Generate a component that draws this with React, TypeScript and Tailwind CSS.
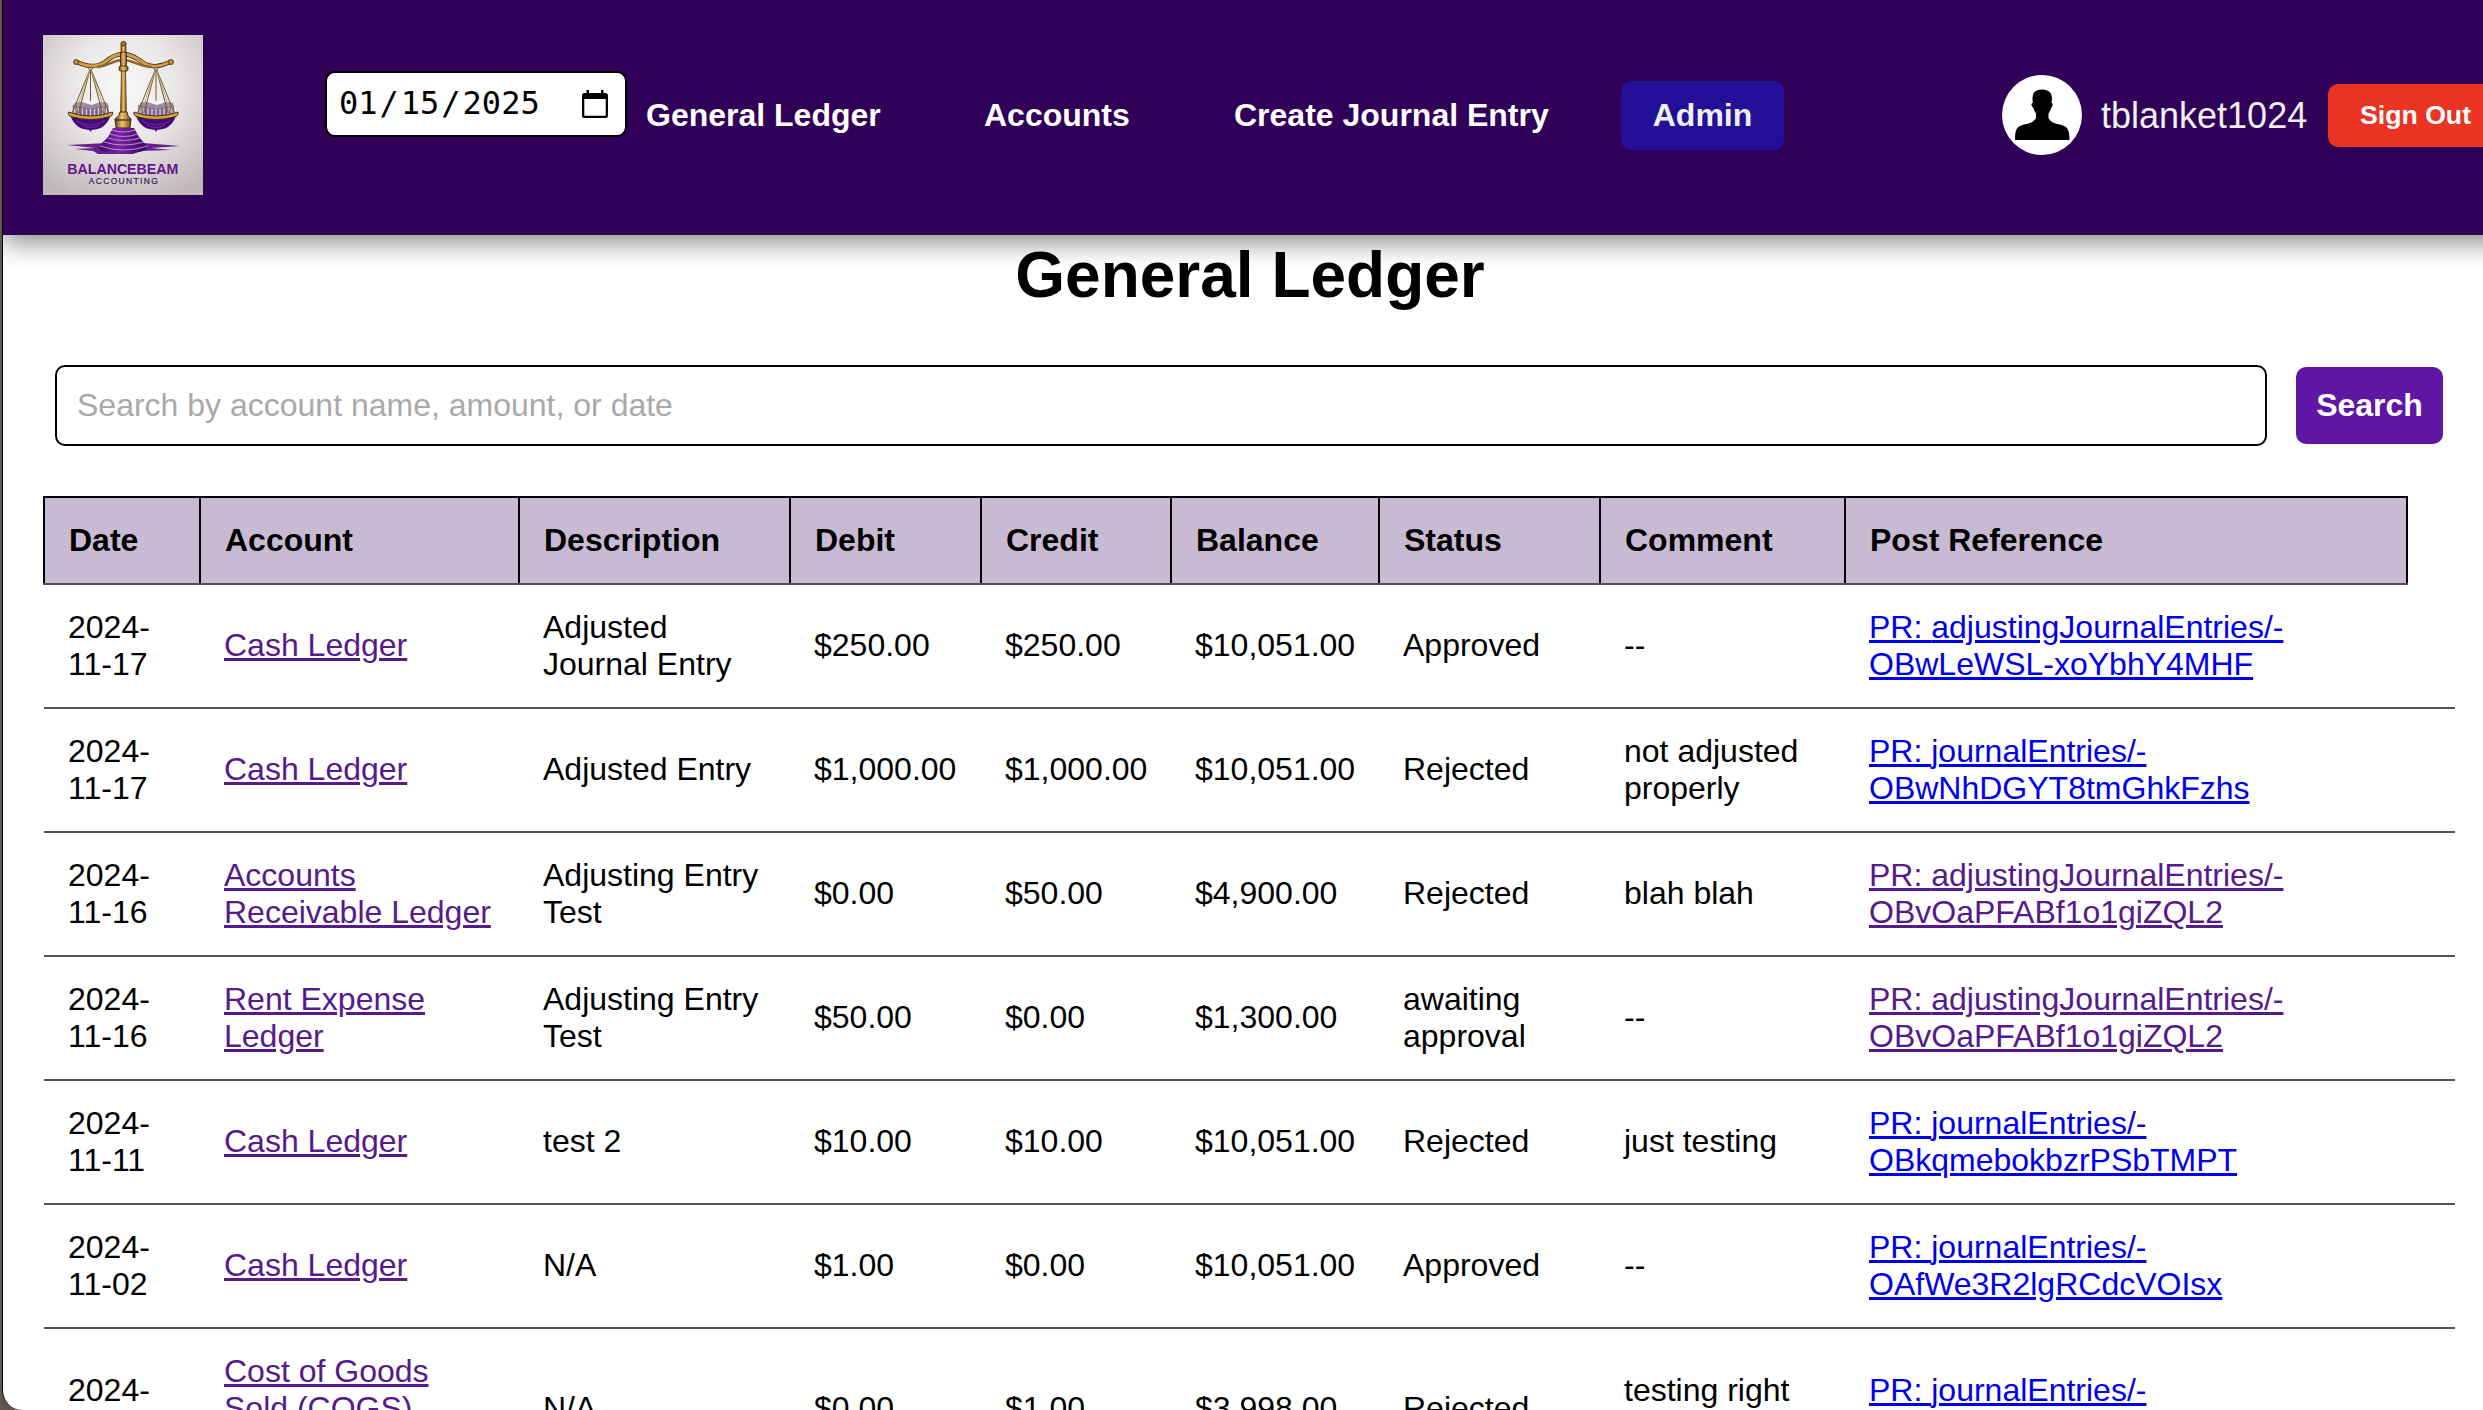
import React from "react";

type Row = {
  date: string;
  account: string;
  description: string;
  debit: string;
  credit: string;
  balance: string;
  status: string;
  comment: string;
  path: string;
  id: string;
  visited?: boolean;
};

const rows: Row[] = [
  { date: "2024-11-17", account: "Cash Ledger", description: "Adjusted Journal Entry", debit: "$250.00", credit: "$250.00", balance: "$10,051.00", status: "Approved", comment: "--", path: "adjustingJournalEntries/-", id: "OBwLeWSL-xoYbhY4MHF" },
  { date: "2024-11-17", account: "Cash Ledger", description: "Adjusted Entry", debit: "$1,000.00", credit: "$1,000.00", balance: "$10,051.00", status: "Rejected", comment: "not adjusted properly", path: "journalEntries/-", id: "OBwNhDGYT8tmGhkFzhs" },
  { date: "2024-11-16", account: "Accounts Receivable Ledger", description: "Adjusting Entry Test", debit: "$0.00", credit: "$50.00", balance: "$4,900.00", status: "Rejected", comment: "blah blah", path: "adjustingJournalEntries/-", id: "OBvOaPFABf1o1giZQL2", visited: true },
  { date: "2024-11-16", account: "Rent Expense Ledger", description: "Adjusting Entry Test", debit: "$50.00", credit: "$0.00", balance: "$1,300.00", status: "awaiting approval", comment: "--", path: "adjustingJournalEntries/-", id: "OBvOaPFABf1o1giZQL2", visited: true },
  { date: "2024-11-11", account: "Cash Ledger", description: "test 2", debit: "$10.00", credit: "$10.00", balance: "$10,051.00", status: "Rejected", comment: "just testing", path: "journalEntries/-", id: "OBkqmebokbzrPSbTMPT" },
  { date: "2024-11-02", account: "Cash Ledger", description: "N/A", debit: "$1.00", credit: "$0.00", balance: "$10,051.00", status: "Approved", comment: "--", path: "journalEntries/-", id: "OAfWe3R2lgRCdcVOIsx" },
  { date: "2024-11-02", account: "Cost of Goods Sold (COGS) Ledger", description: "N/A", debit: "$0.00", credit: "$1.00", balance: "$3,998.00", status: "Rejected", comment: "testing right now", path: "journalEntries/-", id: "OAfWe3R2lgRCdcVOIsx" },
];

const headers = ["Date", "Account", "Description", "Debit", "Credit", "Balance", "Status", "Comment", "Post Reference"];

// Cells that hold one line sit half a pixel higher so that their baseline lands on a whole pixel.
const cell = (text: string) => (text.length < 16 ? "px-6 pt-6 pb-[25px]" : "px-6 py-6");

function Pan({ x }: { x: number }) {
  return (
    <g transform={`translate(${x} 0)`}>
      <path d="M-19 64 L-16 52 L0 48 L17 52 L19 64 Z" fill="#9c8ba2" />
      <path d="M-18 54 L0 58 L18 54 L17 66 H-17 Z" fill="#7d6b88" />
      <path d="M-12 50 L0 47.500 L13 50 L1 54 Z" fill="#f7f4f8" />
      <path d="M-16 55 v9 M-12 57 v8 M-8 57 v9 M-4 58 v9 M0 58 v9 M4 58 v9 M8 57 v9 M12 57 v8 M16 55 v9" stroke="#d9cedd" strokeWidth="1.200" />
      <path d="M0 17 L-18 61 M0 17 L-12 62 M0 17 V50 M0 17 L12 62 M0 17 L18 61" stroke="#6f5a2c" strokeWidth="1" fill="none" />
      <path d="M0 17 L-15 62 M0 17 L15 62" stroke="#c3a565" strokeWidth=".9" fill="none" />
      <path d="M-20 65 C-16 76 -8 79 0 79 C8 79 16 76 20 65 Z" fill="#430a78" />
      <path d="M-14 70 Q0 78 14 70 M-9 74 Q0 79 9 74" stroke="#7a2ab0" strokeWidth=".9" fill="none" />
      <path d="M-22 61 Q0 69 22 61 Q23 65 18 66 Q0 71 -18 66 Q-23 65 -22 61 Z" fill="#d3a03d" stroke="#3b2512" strokeWidth=".9" />
      <circle cx="0" cy="17" r="2" fill="#e8e4ea" stroke="#57496a" strokeWidth=".8" />
      <circle cx="0" cy="79.500" r="1" fill="#3b1260" />
    </g>
  );
}

function Logo() {
  return (
    <svg viewBox="0 0 160 160" className="h-[160px] w-[160px] shrink-0">
      <defs>
        <radialGradient id="paper" cx=".5" cy=".33" r=".75">
          <stop offset="0" stopColor="#fafafa" />
          <stop offset=".45" stopColor="#e9e6e6" />
          <stop offset="1" stopColor="#c1b8b9" />
        </radialGradient>
        <linearGradient id="gold" x1="0" x2="1">
          <stop offset="0" stopColor="#6b4312" />
          <stop offset=".45" stopColor="#f0c46c" />
          <stop offset="1" stopColor="#7a4d17" />
        </linearGradient>
        <linearGradient id="base" x1="0" x2="1">
          <stop offset="0" stopColor="#3c0867" />
          <stop offset=".4" stopColor="#8122a9" />
          <stop offset="1" stopColor="#32055b" />
        </linearGradient>
      </defs>
      <rect width="160" height="160" fill="url(#paper)" />
      <path d="M24 110 L65 108 H100 L137 111 L108 113 L128 115 L98 116 L90 119 H55 L50 116 L32 114 L52 113 Z" fill="#64208b" />
      <g transform="translate(0 16)">
        <Pan x={47.5} />
        <Pan x={113} />
      </g>
      <path d="M34 27 C44 32 53 33 62 27 C68 22 73 19 80 19 C87 19 92 22 99 27 C108 33 116 32 127 27" stroke="#432d17" strokeWidth="4.500" fill="none" strokeLinecap="round" />
      <path d="M34 27 C44 32 53 33 62 27 C68 22 73 19 80 19 C87 19 92 22 99 27 C108 33 116 32 127 27" stroke="#cf9e49" strokeWidth="3" fill="none" strokeLinecap="round" />
      <path d="M54 32 C66 31 70 25 80 25 C90 25 95 31 108 32" stroke="#8f6628" strokeWidth="2.500" fill="none" />
      <circle cx="33" cy="27" r="2.500" fill="#c18e3b" stroke="#432d17" strokeWidth=".8" />
      <circle cx="128" cy="27" r="2.500" fill="#c18e3b" stroke="#432d17" strokeWidth=".8" />
      <rect x="78" y="8" width="5" height="10" fill="url(#gold)" stroke="#3b2512" strokeWidth=".7" />
      <circle cx="80.500" cy="8.500" r="2.300" fill="#a87629" stroke="#3b2512" strokeWidth=".7" />
      <rect x="77.500" y="17" width="6" height="16" rx="2" fill="url(#gold)" stroke="#3b2512" strokeWidth=".8" />
      <path d="M78.500 33 H82.500 L83.500 79 H77.500 Z" fill="url(#gold)" stroke="#4b3016" strokeWidth=".7" />
      <rect x="76" y="31" width="9" height="5" rx="1.500" fill="url(#gold)" stroke="#3b2512" strokeWidth=".8" />
      <path d="M77 77 H84 Q84 81 88 84 L87 93 H73 L72 84 Q77 81 77 77 Z" fill="url(#gold)" stroke="#3b2512" />
      <path d="M72 85 H88" stroke="#3b2512" strokeWidth="1.200" />
      <path d="M70 93 H91 L96 102 L103 110 Q107 115 96 117 Q80 120 64 117 Q52 115 58 109 L65 102 Z" fill="url(#base)" />
      <path d="M69 95 Q80 99 92 95 M67 99 Q80 104 95 99 M65 103 Q80 108 97 103 M61 107 Q80 113 101 107 M57 111 Q80 119 105 111" stroke="#b892cb" strokeWidth="1" fill="none" />
      <text x="79.800" y="139.300" textAnchor="middle" textLength="111" lengthAdjust="spacingAndGlyphs" fontFamily="Liberation Sans, sans-serif" fontWeight="700" fontSize="14.500" fill="#64158f">BALANCEBEAM</text>
      <text x="80.300" y="149" textAnchor="middle" textLength="69" fontFamily="Liberation Sans, sans-serif" fontSize="8.500" fill="#38205f" stroke="#38205f" strokeWidth=".2">ACCOUNTING</text>
    </svg>
  );
}

function Calendar() {
  return (
    <svg viewBox="0 0 26 28" className="h-[28px] w-[26px]">
      <path d="M4.500 0 h2.500 v3 h12 v-3 h2.500 v3 h2 a2.500 2.500 0 0 1 2.500 2.500 V25.500 a2.500 2.500 0 0 1 -2.500 2.500 H2.500 A2.500 2.500 0 0 1 0 25.500 V5.500 A2.500 2.500 0 0 1 2.500 3 h2 Z M2.300 9 V25.700 H23.700 V9 Z" fill="#000" fillRule="evenodd" />
    </svg>
  );
}

function Avatar() {
  return (
    <svg viewBox="0 0 80 80" className="h-[80px] w-[80px] shrink-0">
      <circle cx="40" cy="40" r="40" fill="#fff" />
      <path d="M40 14.500 C47 14.500 50 18 50 24 L49.500 28 C51.500 28 50.500 32 49 33 C48.500 35.500 47.500 37 46.500 38.500 V43 C48.500 47 52 48.200 57 49.300 C65 51 67.500 54 67.500 65 H13 C13 54 15 51 23 49.300 C28 48.200 32 47 34 43 V38.500 C33 37 32 35.500 31.500 33 C29.500 32 28.500 28 30.800 28 L30.500 24 C30.500 18 33 14.500 40 14.500 Z" fill="#000" />
    </svg>
  );
}

export default function App() {
  return (
    <div className="flex h-[1410px] w-[2483px] overflow-hidden bg-[#5f564c] font-['Liberation_Sans',Arial,sans-serif] text-[32px] leading-[37px] text-black">
      <div className="ml-[2px] flex min-w-0 flex-1 flex-col overflow-hidden rounded-bl-[20px] border-l border-black bg-white">
        <header className="relative flex h-[235px] w-[2560px] shrink-0 bg-[#300059] pl-10 text-white shadow-[0_8px_24px_rgba(0,0,0,0.45)]">
          <div className="mt-[35px]">
            <Logo />
          </div>
          <div className="ml-[122px] mt-[71px] flex h-[66px] w-[302px] shrink-0 items-center justify-between rounded-[10px] border-2 border-black bg-white pl-[10px] pr-[17px] font-['DejaVu_Sans_Mono',monospace] text-black">
            <span className="whitespace-nowrap pb-[1px]">
              <span className="px-[2px]">01</span>/<span className="px-[2px]">15</span>/<span className="px-[2px]">2025</span>
            </span>
            <Calendar />
          </div>
          <nav className="ml-[19px] mt-[81px] flex h-[69px] items-center whitespace-nowrap font-bold">
            <a className="w-[338px] pb-[1px]">General Ledger</a>
            <a className="w-[250px] pb-[1px]">Accounts</a>
            <a className="w-[387px] pb-[1px]">Create Journal Entry</a>
            <button className="h-[69px] w-[163px] rounded-[10px] bg-[#240f99] pb-[1px] text-center text-[#efefef]">Admin</button>
          </nav>
          <div className="ml-[218px] mt-[75px] flex h-[80px] items-center whitespace-nowrap">
            <Avatar />
            <span className="ml-[19px] w-[227px] text-[36px] leading-[41px] text-[#efefef]">tblanket1024</span>
            <button className="h-[63px] w-[175px] shrink-0 rounded-[10px] bg-[#ea3323] text-center text-[26.670px] font-bold leading-[30px]">Sign Out</button>
          </div>
        </header>

        <main className="flex flex-col pl-10">
          <h1 className="ml-[1px] mt-[3px] w-[2412px] text-center text-[64px] font-bold leading-[74px]">General Ledger</h1>
          <div className="ml-3 mt-[53px] flex items-center">
            <div className="flex h-[81px] w-[2212px] items-center rounded-[10px] border-2 border-black px-5 text-[#a9a9a9]">
              Search by account name, amount, or date
            </div>
            <button className="ml-[29px] h-[77px] w-[147px] rounded-[10px] bg-[#6016a5] text-center font-bold text-white">Search</button>
          </div>
          <table className="mt-[50px] w-[2412px] table-fixed border-collapse text-left">
            <colgroup>
              <col className="w-[156px]" />
              <col className="w-[319px]" />
              <col className="w-[271px]" />
              <col className="w-[191px]" />
              <col className="w-[190px]" />
              <col className="w-[208px]" />
              <col className="w-[221px]" />
              <col className="w-[245px]" />
              <col className="w-[562px]" />
              <col className="w-[48px]" />
            </colgroup>
            <thead>
              <tr>
                {headers.map((h) => (
                  <th key={h} className="border-2 border-black border-b-[#545054] bg-[#c8bad3] px-6 py-6 font-bold">{h}</th>
                ))}
              </tr>
            </thead>
            <tbody>
              {rows.map((r, i) => (
                <tr key={i} className="[&>td]:border-b-2 [&>td]:border-[#545454]">
                  <td className="px-6 py-6">{r.date.slice(0, 5)}<br />{r.date.slice(5)}</td>
                  <td className={cell(r.account)}><a className="text-[#551a8b] underline">{r.account}</a></td>
                  <td className={cell(r.description)}>{r.description}</td>
                  <td className={cell(r.debit)}>{r.debit}</td>
                  <td className={cell(r.credit)}>{r.credit}</td>
                  <td className={cell(r.balance)}>{r.balance}</td>
                  <td className={cell(r.status)}>{r.status}</td>
                  <td className={cell(r.comment)}>{r.comment}</td>
                  <td className="px-6 py-6">
                    <a className={r.visited ? "text-[#551a8b] underline" : "text-[#0000ee] underline"}>
                      PR: {r.path}<br />{r.id}
                    </a>
                  </td>
                  <td />
                </tr>
              ))}
            </tbody>
          </table>
        </main>
      </div>
    </div>
  );
}
